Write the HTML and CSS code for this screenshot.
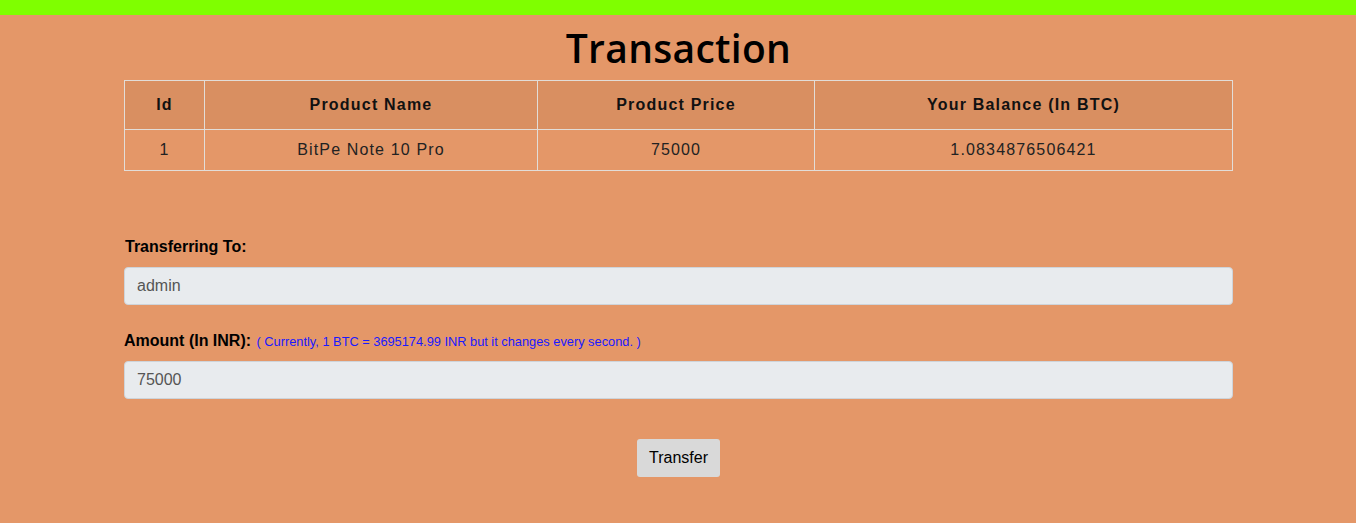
FILE: index.html
```html
<!DOCTYPE html>
<html>
<head>
<meta charset="utf-8">
<link rel="stylesheet" href="styles.css">
</head>
<body>
<div class="topbar"></div>
<main class="page">
  <h1 class="title">Transaction</h1>
  <table class="tx">
    <thead>
      <tr>
        <th class="c-id">Id</th>
        <th class="c-name">Product Name</th>
        <th class="c-price">Product Price</th>
        <th class="c-bal">Your Balance (In BTC)</th>
      </tr>
    </thead>
    <tbody>
      <tr>
        <td>1</td>
        <td>BitPe Note 10 Pro</td>
        <td>75000</td>
        <td>1.0834876506421</td>
      </tr>
    </tbody>
  </table>
  <form class="form">
    <div class="field">
      <label class="label">Transferring To:</label>
      <input class="input" type="text" value="admin">
    </div>
    <div class="field field-amount">
      <label class="label">Amount (In INR): <span class="note">( Currently, 1 BTC = 3695174.99 INR but it changes every second. )</span></label>
      <input class="input" type="text" value="75000">
    </div>
    <div class="actions">
      <button class="btn" type="button">Transfer</button>
    </div>
  </form>
</main>
</body>
</html>
```
FILE: styles.css
```css
html, body {
  margin: 0;
  padding: 0;
}
body {
  background: #e49768;
  font-family: "Liberation Sans", Arial, sans-serif;
  color: #000;
  height: 523px;
  overflow: hidden;
}
.topbar {
  height: 15px;
  background: #7fff00;
}
.page {
  width: 1109px;
  margin: 0 auto;
  padding-left: 1px;
}
.title {
  margin: 10px 0 0;
  height: 55px;
  text-align: center;
  font-family: "Open Sans", "Lato", sans-serif;
  font-weight: 600;
  font-size: 39px;
  line-height: 46px;
  letter-spacing: 0.3px;
}
.tx {
  width: 1109px;
  border-collapse: collapse;
  table-layout: fixed;
}
.tx th, .tx td {
  border: 1px solid #e2ddd8;
  text-align: center;
  padding: 0;
}
.tx thead tr {
  background: #d98f61;
}
.tx th {
  height: 48px;
  font-size: 16px;
  font-weight: bold;
  letter-spacing: 1.2px;
  color: #111;
}
.tx td {
  height: 40px;
  font-size: 16px;
  letter-spacing: 1.15px;
  color: #222;
}
.c-id { width: 79px; }
.c-name { width: 332px; }
.c-price { width: 276px; }
.form {
  margin-top: 66px;
}
.field {
  margin-bottom: 18px;
}
.label {
  display: block;
  font-weight: bold;
  font-size: 16px;
  line-height: 20px;
  margin: 0 0 10px 1px;
}
.field-amount {
  margin-top: 26px;
}
.field-amount .label {
  margin: 0 0 9px 0;
}
.note {
  font-weight: normal;
  font-size: 12.8px;
  color: #1a1aff;
  margin-left: 1px;
}
.input {
  display: block;
  box-sizing: border-box;
  width: 100%;
  height: 38px;
  border: 1px solid #ced4da;
  border-radius: 4px;
  background: #e8ebee;
  font-family: "Liberation Sans", Arial, sans-serif;
  font-size: 16px;
  color: #555;
  padding: 0 12px;
  outline: none;
}
.actions {
  display: flex;
  justify-content: center;
  padding-top: 22px;
}
.btn {
  box-sizing: border-box;
  width: 83px;
  height: 38px;
  background: #d9d9d9;
  border: none;
  border-radius: 3px;
  font-family: "Liberation Sans", Arial, sans-serif;
  font-size: 16px;
  color: #000;
  cursor: pointer;
}
```
